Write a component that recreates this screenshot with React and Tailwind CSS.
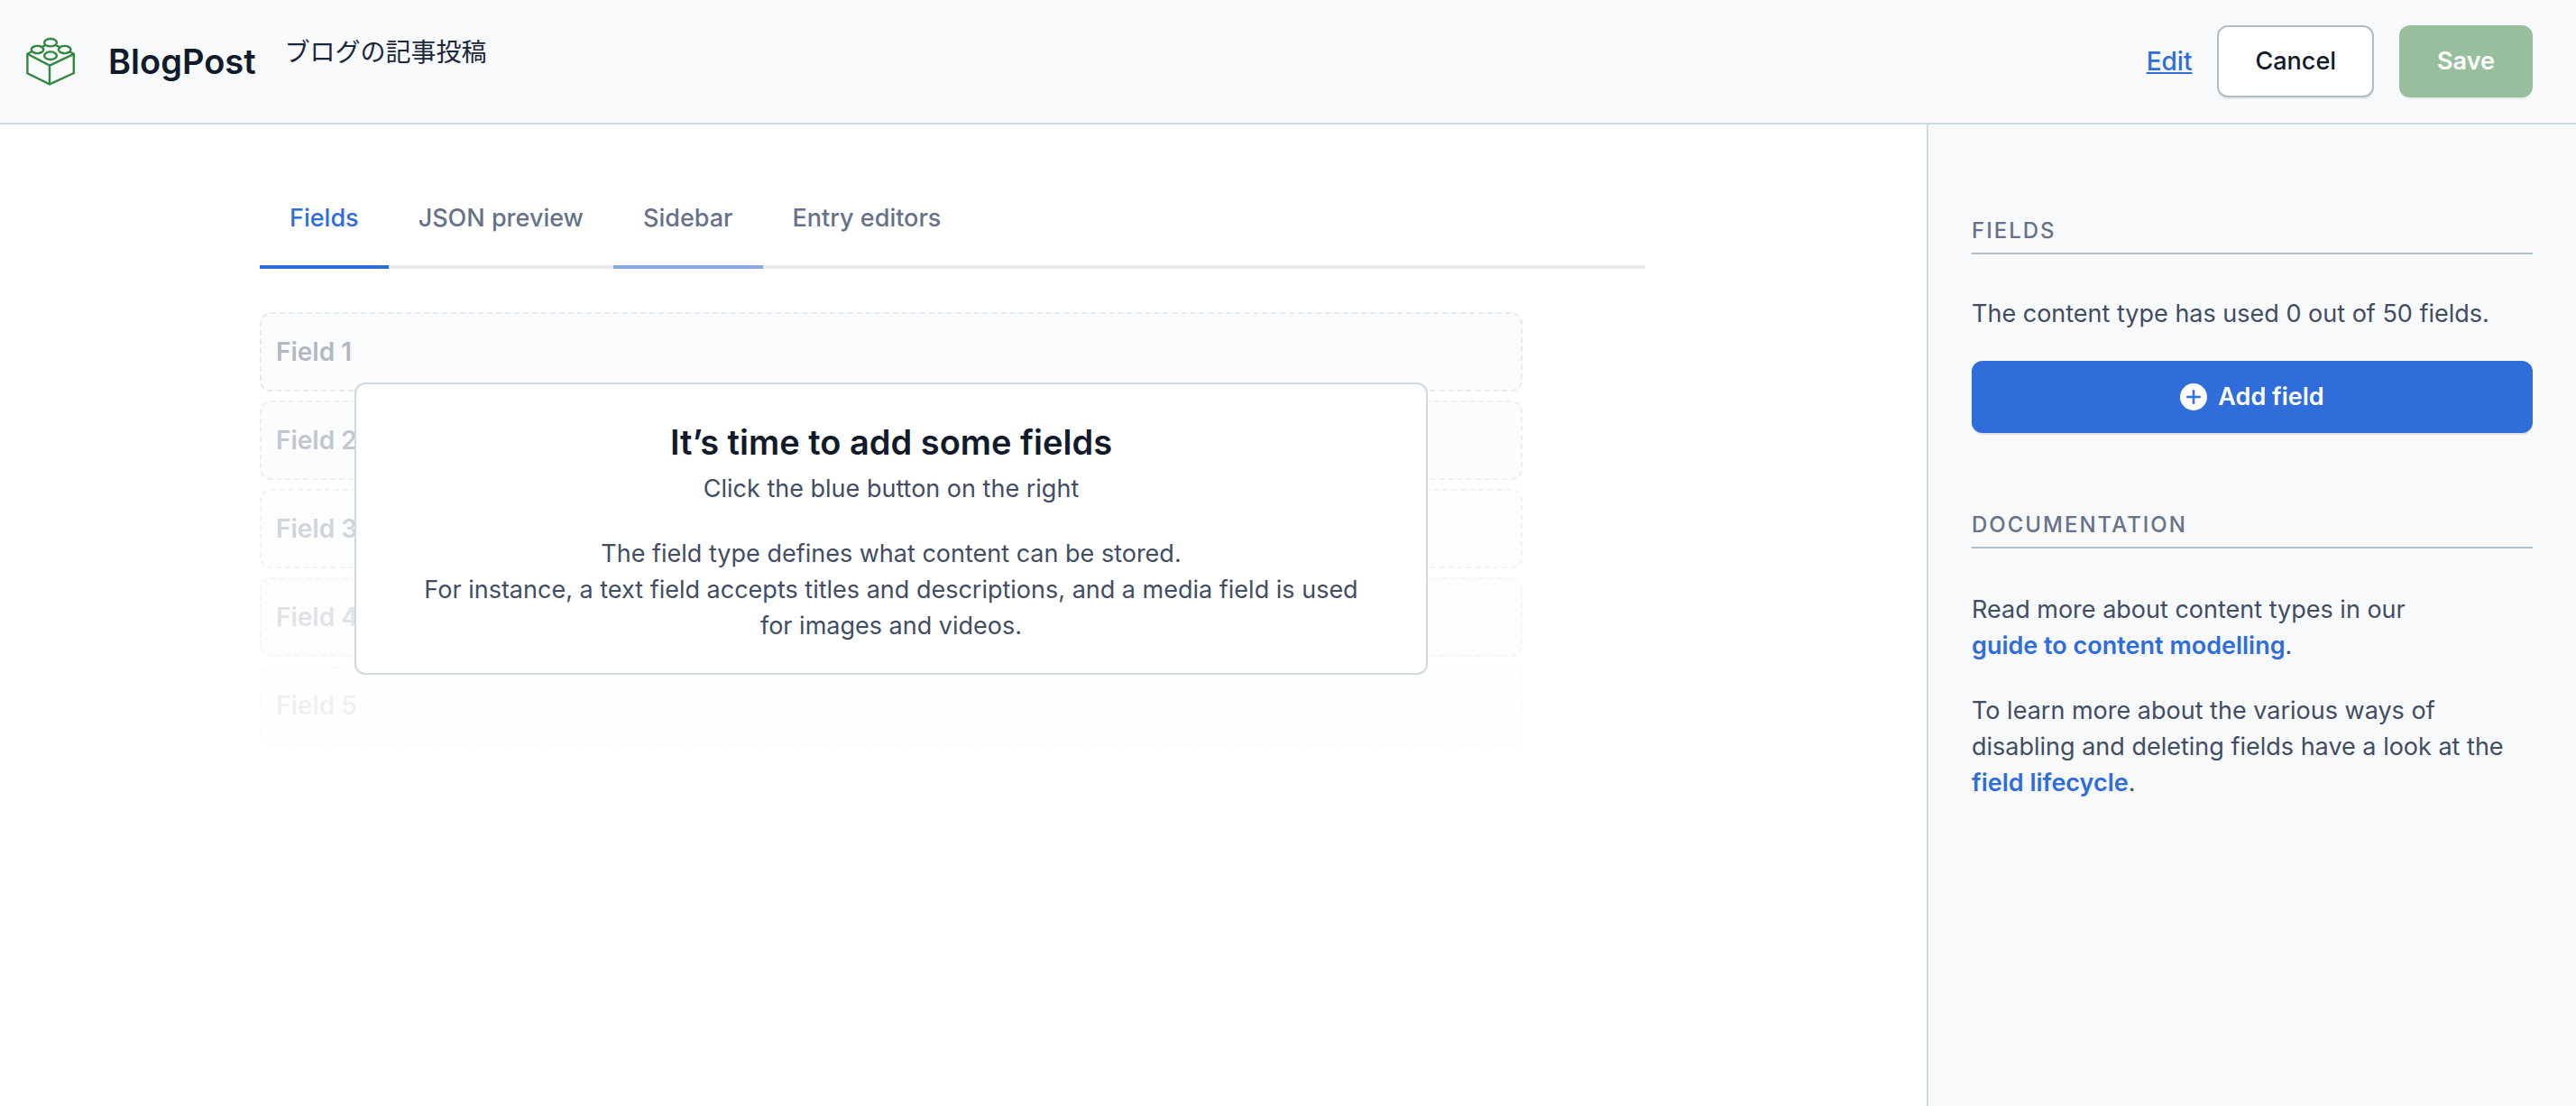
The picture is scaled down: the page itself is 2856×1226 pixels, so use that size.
import React, { useState } from "react";

const TABS = ["Fields", "JSON preview", "Sidebar", "Entry editors"];

const FIELDS = [
  { name: "Field 1", fade: "opacity-50" },
  { name: "Field 2", fade: "opacity-40" },
  { name: "Field 3", fade: "opacity-30" },
  { name: "Field 4", fade: "opacity-20" },
  { name: "Field 5", fade: "opacity-10" },
];

function BrickIcon() {
  return (
    <svg
      className="h-[54px] w-[56px] shrink-0"
      viewBox="8 11 56 54"
      fill="none"
      stroke="#33873f"
      strokeWidth="2.4"
      aria-hidden="true"
    >
      <path d="M15.2 27.2 10.4 29.8v21.5L35 63.4l26.8-12.3V29.8L57.3 27.2" />
      <path d="M10.4 29.8 35 42.6 61.8 29.8M35 42.6v20.8" />
      <path d="M30 20.4l-3.4 1.6M42 20.4l4 1.6" />
      <ellipse cx="36" cy="17.2" rx="6.9" ry="4.2" />
      <ellipse cx="21.5" cy="25" rx="6.8" ry="4.1" />
      <ellipse cx="51.7" cy="25" rx="6.8" ry="4.1" />
      <ellipse cx="36" cy="31.7" rx="6.9" ry="4.3" />
    </svg>
  );
}

function PlusCircleIcon() {
  return (
    <svg className="size-[30px] shrink-0" viewBox="0 0 30 30" aria-hidden="true">
      <circle cx="15" cy="15" r="15" fill="#fff" />
      <path d="M15 7.2v15.6M7.2 15h15.6" stroke="#2e6dda" strokeWidth="2.6" />
    </svg>
  );
}

function Header() {
  return (
    <header className="flex items-center justify-between border-b-2 border-[#cfd9e0] bg-[#f7f9fa] py-7 pr-12 pl-7">
      <div className="flex items-center">
        <BrickIcon />
        <h1 className="ml-9 text-[38px] leading-[48px] font-semibold text-[#111b2b]">BlogPost</h1>
        <p className="ml-8 self-start text-[28px] leading-[34px] text-[#1b273a]">ブログの記事投稿</p>
      </div>
      <div className="flex items-center gap-7 font-medium">
        <a href="#edit" className="text-[28px] text-[#2e6dda] underline decoration-2 underline-offset-2">
          Edit
        </a>
        <button
          type="button"
          className="h-20 rounded-xl border-2 border-[#aebdca] bg-white px-10 text-[#111b2b] shadow-[0_2px_0_rgba(25,37,50,0.08)]"
        >
          Cancel
        </button>
        <button
          type="button"
          disabled
          className="h-20 rounded-xl bg-[#99be9e] px-[42px] font-semibold text-white shadow-[0_2px_0_rgba(25,37,50,0.05)]"
        >
          Save
        </button>
      </div>
    </header>
  );
}

function Tabs() {
  const [active, setActive] = useState("Fields");
  return (
    <div role="tablist" className="flex border-b-4 border-[#e7ebee]">
      {TABS.map((tab) => (
        <button
          key={tab}
          type="button"
          role="tab"
          aria-selected={tab === active}
          onClick={() => setActive(tab)}
          className={
            "-mb-1 border-b-4 px-[33px] py-8 font-medium " +
            (tab === active
              ? "border-[#2e6dda] text-[#2e6dda]"
              : tab === "Sidebar"
                ? "border-[#8cabe4] text-[#67728a]"
                : "border-transparent text-[#67728a]")
          }
        >
          {tab}
        </button>
      ))}
    </div>
  );
}

function EmptyState() {
  return (
    <section className="relative mt-12 mr-[136px]">
      <ul className="flex flex-col gap-[10px]">
        {FIELDS.map((field) => (
          <li
            key={field.name}
            className={
              "flex h-[88px] items-center rounded-xl border-2 border-dashed border-[#cfd9e0] bg-[#f7f9fa] px-4 text-[28px] font-semibold text-[#67728a] " +
              field.fade
            }
          >
            {field.name}
          </li>
        ))}
      </ul>
      <div className="absolute inset-x-0 top-[78px] mx-auto w-[85%] rounded-xl border-2 border-[#cfd9e0] bg-white px-[60px] pt-10 pb-8 text-center">
        <h2 className="text-[38px] leading-[48px] font-semibold text-[#111b2b]">It’s time to add some fields</h2>
        <p className="mt-2">Click the blue button on the right</p>
        <p className="mt-8">
          The field type defines what content can be stored.
          <br />
          For instance, a text field accepts titles and descriptions, and a media field is used for images and videos.
        </p>
      </div>
    </section>
  );
}

function SidebarHeading({ children }) {
  return (
    <h2 className="border-b-2 border-[#aebdca] pb-2 text-2xl leading-8 font-medium tracking-[2px] text-[#67728a] uppercase">
      {children}
    </h2>
  );
}

function Sidebar() {
  return (
    <aside className="w-[720px] shrink-0 border-l-2 border-[#cfd9e0] bg-[#f7f9fa] pt-[102px] pr-12 pl-12">
      <section>
        <SidebarHeading>Fields</SidebarHeading>
        <p className="mt-[46px]">The content type has used 0 out of 50 fields.</p>
        <button
          type="button"
          className="mt-8 flex h-20 w-full items-center justify-center gap-3 rounded-xl bg-[#2e6dda] font-semibold text-white shadow-[0_2px_0_rgba(25,37,50,0.1)]"
        >
          <PlusCircleIcon />
          Add field
        </button>
      </section>
      <section className="mt-[86px]">
        <SidebarHeading>Documentation</SidebarHeading>
        <p className="mt-12">
          Read more about content types in our
          <br />
          <a href="#guide" className="font-semibold text-[#2e6dda]">
            guide to content modelling
          </a>
          .
        </p>
        <p className="mt-8">
          To learn more about the various ways of disabling and deleting fields have a look at the{" "}
          <a href="#lifecycle" className="font-semibold text-[#2e6dda]">
            field lifecycle
          </a>
          .
        </p>
      </section>
    </aside>
  );
}

export default function App() {
  return (
    <div className="flex min-h-screen flex-col bg-white font-['Inter','Noto_Sans_CJK_JP',sans-serif] text-[27px] leading-10 text-[#414d63]">
      <Header />
      <div className="flex flex-1">
        <main className="min-w-0 flex-1 pt-[52px] pr-[312px] pl-[288px]">
          <Tabs />
          <EmptyState />
        </main>
        <Sidebar />
      </div>
    </div>
  );
}
